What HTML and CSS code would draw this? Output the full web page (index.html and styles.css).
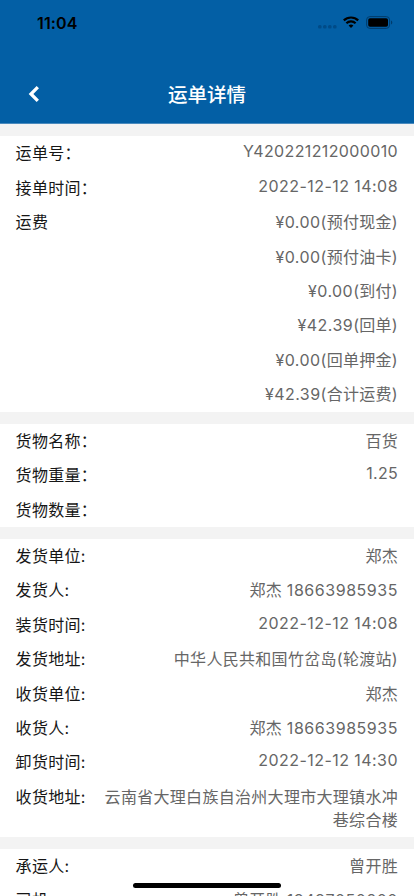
FILE: index.html
```html
<!DOCTYPE html>
<html lang="zh-CN">
<head>
<meta charset="utf-8">
<meta name="viewport" content="width=device-width, initial-scale=1">
<title>运单详情</title>
<link rel="stylesheet" href="styles.css">
</head>
<body>
<div class="screen">
  <header class="header">
    <div class="status">
      <span class="clock">11:04</span>
      <div class="indicators">
        <svg class="dots" width="19" height="4" viewBox="0 0 19 4"><g fill="#004b87"><rect x="0" width="3.6" height="3.6" rx="1.5"/><rect x="5" width="3.6" height="3.6" rx="1.5"/><rect x="10" width="3.6" height="3.6" rx="1.5"/><rect x="15" width="3.6" height="3.6" rx="1.5"/></g></svg>
        <svg class="wifi" width="16" height="12" viewBox="0 0 16 12"><g fill="none" stroke="#000" stroke-width="2.2"><path d="M.8 4.4a10.4 10.4 0 0 1 14.4 0"/><path d="M3.4 7.3a6.6 6.6 0 0 1 9.2 0"/></g><path d="M8 12 5.6 9.6a3.5 3.5 0 0 1 4.8 0Z"/></svg>
        <svg class="battery" width="27" height="13" viewBox="0 0 27 13"><rect x=".6" y=".6" width="23" height="11.8" rx="3.3" fill="none" stroke="#003c6c"/><rect x="2.2" y="2.2" width="19.8" height="8.6" rx="1.8"/><path d="M25 4.4c1.8.7 1.8 3.5 0 4.2Z" fill="#003c6c"/></svg>
      </div>
    </div>
    <div class="nav">
      <svg class="back" width="12" height="18" viewBox="0 0 12 18"><path d="M9.8 2.2 3 9l6.8 6.8" fill="none" stroke="#fff" stroke-width="3.3"/></svg>
      <h1 class="title">运单详情</h1>
    </div>
  </header>
  <main class="content">
    <section class="group">
      <div class="row"><span class="label">运单号：</span><span class="value num id">Y420221212000010</span></div>
      <div class="row"><span class="label">接单时间：</span><span class="value num">2022-12-12 14:08</span></div>
      <div class="row"><span class="label">运费</span><span class="value"><span class="amount">¥0.00</span>(预付现金)</span></div>
      <div class="row"><span class="value"><span class="amount">¥0.00</span>(预付油卡)</span></div>
      <div class="row"><span class="value"><span class="amount">¥0.00</span>(到付)</span></div>
      <div class="row"><span class="value"><span class="amount">¥42.39</span>(回单)</span></div>
      <div class="row"><span class="value"><span class="amount">¥0.00</span>(回单押金)</span></div>
      <div class="row"><span class="value"><span class="amount">¥42.39</span>(合计运费)</span></div>
    </section>
    <section class="group">
      <div class="row"><span class="label">货物名称：</span><span class="value">百货</span></div>
      <div class="row"><span class="label">货物重量：</span><span class="value num weight">1.25</span></div>
      <div class="row"><span class="label">货物数量：</span></div>
    </section>
    <section class="group">
      <div class="row"><span class="label">发货单位:</span><span class="value">郑杰</span></div>
      <div class="row"><span class="label">发货人:</span><span class="value">郑杰 <span class="phone">18663985935</span></span></div>
      <div class="row"><span class="label">装货时间:</span><span class="value num">2022-12-12 14:08</span></div>
      <div class="row"><span class="label">发货地址:</span><span class="value">中华人民共和国竹岔岛(轮渡站)</span></div>
      <div class="row"><span class="label">收货单位:</span><span class="value">郑杰</span></div>
      <div class="row"><span class="label">收货人:</span><span class="value">郑杰 <span class="phone">18663985935</span></span></div>
      <div class="row"><span class="label">卸货时间:</span><span class="value num">2022-12-12 14:30</span></div>
      <div class="row address"><span class="label">收货地址:</span><span class="value">云南省大理白族自治州大理市大理镇水冲<br>巷综合楼</span></div>
    </section>
    <section class="group">
      <div class="row"><span class="label">承运人:</span><span class="value">曾开胜</span></div>
      <div class="row"><span class="label">司机:</span><span class="value">曾开胜 <span class="phone">18487050200</span></span></div>
    </section>
  </main>
  <div class="home-indicator"></div>
</div>
</body>
</html>
```
FILE: styles.css
```css
* { box-sizing: border-box; }
body { margin: 0; background: #f3f3f3; font-family: Inter, "Noto Sans CJK SC", sans-serif; }
.screen { position: relative; width: 414px; height: 896px; overflow: hidden; }
.header { height: 124px; background: #035fa5; border-bottom: 1px solid #4a8abd; }
.status { display: flex; justify-content: space-between; height: 64px; padding: 13px 21px 0 37px; }
.clock { font-size: 16px; line-height: 20px; font-weight: 600; letter-spacing: 0.15px; color: #000; }
.indicators { display: flex; align-items: flex-start; padding-top: 3px; }
.dots { margin: 9px 6px 0 0; }
.wifi { margin-right: 7px; }
.nav { display: grid; grid-template-columns: 60px 1fr 60px; align-items: center; height: 60px; }
.back { margin-left: 28px; }
.title { margin: 0; padding-top: 2px; text-align: center; color: #fff; font-size: 19.5px; line-height: 30px; font-weight: 500; }
.content { display: grid; gap: 11.8px; padding-top: 12.2px; }
.group { background: #fff; }
.row { display: flex; justify-content: space-between; padding: 6px 16px; font-size: 16px; line-height: 22.45px; letter-spacing: 0.3px; }
.address { line-height: 22.6px; }
.label { margin-left: -0.4px; color: #161616; white-space: nowrap; }
.value { margin-left: auto; text-align: right; color: #666; white-space: nowrap; }
.num { position: relative; top: -2px; letter-spacing: 0.45px; }
.id { letter-spacing: 0.37px; }
.weight { letter-spacing: 0.3px; }
.amount { letter-spacing: 0.45px; }
.phone { letter-spacing: 0.54px; }
.home-indicator { position: absolute; left: 133px; bottom: 8px; width: 148px; height: 5px; border-radius: 3px; background: #000; }
```
